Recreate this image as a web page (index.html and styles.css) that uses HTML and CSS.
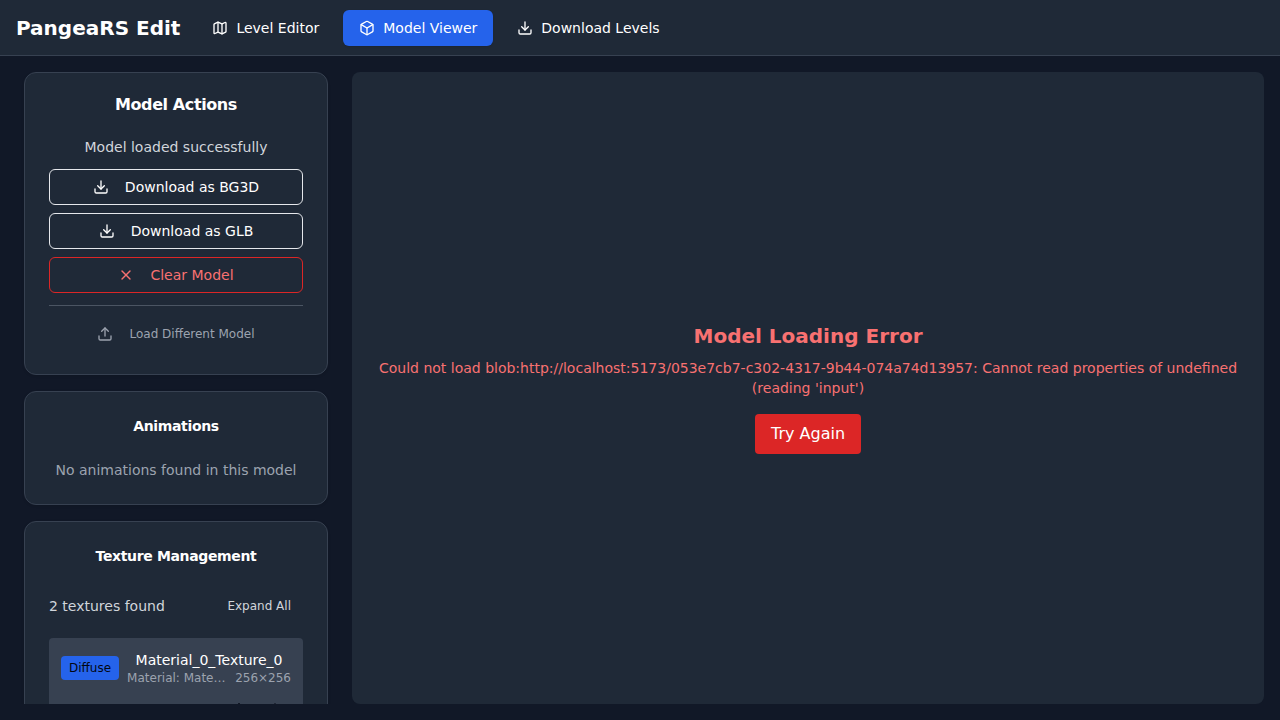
FILE: index.html
```html
<!DOCTYPE html>
<html lang="en">
<head>
<meta charset="utf-8">
<title>PangeaRS Edit</title>
<link rel="stylesheet" href="styles.css">
</head>
<body>
<svg class="sprite" aria-hidden="true">
  <symbol id="map" viewBox="0 0 24 24"><path d="M14.106 5.553a2 2 0 0 0 1.788 0l3.659-1.83A1 1 0 0 1 21 4.619v12.764a1 1 0 0 1-.553.894l-4.553 2.277a2 2 0 0 1-1.788 0l-4.212-2.106a2 2 0 0 0-1.788 0l-3.659 1.83A1 1 0 0 1 3 19.381V6.618a1 1 0 0 1 .553-.894l4.553-2.277a2 2 0 0 1 1.788 0z"/><path d="M15 5.764v15"/><path d="M9 3.236v15"/></symbol>
  <symbol id="box" viewBox="0 0 24 24"><path d="M21 8a2 2 0 0 0-1-1.73l-7-4a2 2 0 0 0-2 0l-7 4A2 2 0 0 0 3 8v8a2 2 0 0 0 1 1.73l7 4a2 2 0 0 0 2 0l7-4A2 2 0 0 0 21 16Z"/><path d="m3.3 7 8.7 5 8.7-5"/><path d="M12 22V12"/></symbol>
  <symbol id="download" viewBox="0 0 24 24"><path d="M21 15v4a2 2 0 0 1-2 2H5a2 2 0 0 1-2-2v-4"/><path d="m7 10 5 5 5-5"/><path d="M12 15V3"/></symbol>
  <symbol id="upload" viewBox="0 0 24 24"><path d="M21 15v4a2 2 0 0 1-2 2H5a2 2 0 0 1-2-2v-4"/><path d="m17 8-5-5-5 5"/><path d="M12 3v12"/></symbol>
  <symbol id="close" viewBox="0 0 24 24"><path d="M18 6 6 18"/><path d="m6 6 12 12"/></symbol>
</svg>
<div class="app">
  <header class="topbar">
    <h1 class="brand">PangeaRS Edit</h1>
    <nav class="nav">
      <a class="nav-item"><svg class="icon"><use href="#map"/></svg>Level Editor</a>
      <a class="nav-item active"><svg class="icon"><use href="#box"/></svg>Model Viewer</a>
      <a class="nav-item"><svg class="icon"><use href="#download"/></svg>Download Levels</a>
    </nav>
  </header>
  <main class="workspace">
    <aside class="sidebar">
      <section class="card actions">
        <h2 class="card-title large">Model Actions</h2>
        <p class="status">Model loaded successfully</p>
        <button class="btn"><svg class="icon"><use href="#download"/></svg>Download as BG3D</button>
        <button class="btn"><svg class="icon"><use href="#download"/></svg>Download as GLB</button>
        <button class="btn danger"><svg class="icon"><use href="#close"/></svg>Clear Model</button>
        <div class="reload">
          <button class="btn ghost"><svg class="icon"><use href="#upload"/></svg>Load Different Model</button>
        </div>
      </section>
      <section class="card">
        <h2 class="card-title">Animations</h2>
        <p class="empty">No animations found in this model</p>
      </section>
      <section class="card">
        <h2 class="card-title">Texture Management</h2>
        <div class="texture-bar"><span>2 textures found</span><button class="expand">Expand All</button></div>
        <div class="texture">
          <span class="badge">Diffuse</span>
          <div class="texture-info">
            <p class="texture-name">Material_0_Texture_0</p>
            <div class="texture-meta"><span class="material">Material: Mate…</span><span>256×256</span></div>
            <div class="texture-tools">
              <button class="tool" aria-label="Upload"><svg class="icon small"><use href="#upload"/></svg></button>
              <button class="tool" aria-label="Download"><svg class="icon small"><use href="#download"/></svg></button>
            </div>
          </div>
        </div>
      </section>
    </aside>
    <section class="viewer">
      <h2 class="error-title">Model Loading Error</h2>
      <p class="error-text">Could not load blob:http://localhost:5173/053e7cb7-c302-4317-9b44-074a74d13957: Cannot read properties of undefined (reading 'input')</p>
      <button class="retry">Try Again</button>
    </section>
  </main>
</div>
</body>
</html>
```
FILE: styles.css
```css
* { box-sizing: border-box; margin: 0; padding: 0; }
body { background: #111827; color: #fff; font: 16px/24px "DejaVu Sans", sans-serif; overflow: hidden; }
button { font: inherit; color: inherit; background: none; border: 0; }
.sprite { display: none; }
.icon { width: 16px; height: 16px; flex: none; fill: none; stroke: currentColor; stroke-width: 2; stroke-linecap: round; stroke-linejoin: round; }
.icon.small { width: 12px; height: 12px; }
.app { height: 100vh; display: flex; flex-direction: column; }
.topbar { height: 56px; flex: none; display: flex; align-items: center; gap: 16px; padding: 0 16px; background: #1f2937; border-bottom: 1px solid #374151; }
.brand { font-size: 20px; line-height: 28px; font-weight: 700; }
.nav { display: flex; gap: 8px; }
.nav-item { display: flex; align-items: center; gap: 8px; height: 36px; padding: 0 16px; border-radius: 6px; font-size: 14px; line-height: 20px; }
.nav-item.active { background: #2563eb; box-shadow: 0 1px 2px rgba(0, 0, 0, .1); }
.workspace { flex: 1; min-height: 0; display: grid; grid-template-columns: 320px 1fr; gap: 16px; padding: 16px; }
.sidebar { display: flex; flex-direction: column; gap: 16px; padding: 0 8px; overflow: hidden; }
.card { flex: none; padding: 24px; background: #1f2937; border: 1px solid #374151; border-radius: 12px; box-shadow: 0 1px 3px rgba(0, 0, 0, .1); }
.card-title { padding-bottom: 24px; font-size: 14px; line-height: 20px; letter-spacing: -.35px; font-weight: 700; text-align: center; }
.card-title.large { padding-bottom: 16px; font-size: 16px; line-height: 16px; letter-spacing: -.4px; }
.actions { display: flex; flex-direction: column; gap: 8px; }
.status, .empty { font-size: 14px; line-height: 20px; text-align: center; }
.status { color: #d1d5db; padding-bottom: 4px; }
.empty { color: #9ca3af; }
.btn { width: 100%; height: 36px; display: flex; align-items: center; justify-content: center; gap: 16px; border: 1px solid #e5e7eb; border-radius: 6px; font-size: 14px; line-height: 20px; }
.btn.danger { border-color: #dc2626; color: #f87171; }
.reload { margin-top: 4px; padding-top: 12px; border-top: 1px solid #4b5563; }
.btn.ghost { height: 32px; border: 0; color: #9ca3af; font-size: 12px; line-height: 16px; }
.texture-bar { display: flex; justify-content: space-between; align-items: center; height: 32px; margin-bottom: 16px; color: #d1d5db; font-size: 14px; line-height: 20px; }
.expand { padding: 0 12px; font-size: 12px; line-height: 16px; }
.texture { display: flex; align-items: flex-start; gap: 8px; padding: 12px; background: #374151; border-radius: 4px; }
.badge { flex: none; margin-top: 6px; padding: 4px 8px; border-radius: 4px; background: #2563eb; color: #030712; font-size: 12px; line-height: 16px; }
.texture-info { flex: 1; min-width: 0; text-align: center; }
.texture-name { font-size: 14px; line-height: 20px; }
.texture-meta { display: flex; justify-content: space-between; gap: 8px; color: #9ca3af; font-size: 12px; line-height: 16px; }
.material { white-space: nowrap; }
.texture-tools { display: flex; justify-content: flex-end; gap: 4px; margin-top: 6px; color: #030712; }
.tool { width: 32px; height: 32px; display: flex; align-items: center; justify-content: center; }
.viewer { display: flex; flex-direction: column; align-items: center; justify-content: center; padding: 0 16px; background: #1f2937; border-radius: 8px; color: #f87171; text-align: center; }
.error-title { margin-bottom: 8px; font-size: 20px; line-height: 28px; font-weight: 700; }
.error-text { margin-bottom: 16px; font-size: 14px; line-height: 20px; }
.retry { padding: 8px 16px; border-radius: 4px; background: #dc2626; color: #fff; }
```
